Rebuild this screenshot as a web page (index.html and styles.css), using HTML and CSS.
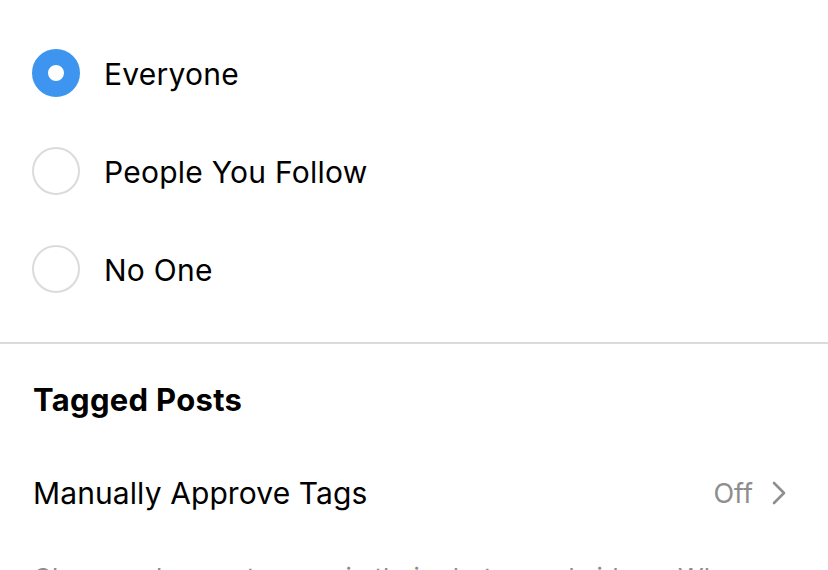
FILE: index.html
```html
<!DOCTYPE html>
<html lang="en">
<head>
    <meta charset="UTF-8">
    <meta name="viewport" content="width=device-width, initial-scale=1.0">
    <title>Tags</title>
    <link rel="stylesheet" href="styles.css">
</head>
<body>
    <div class="screen">
        <div class="options">
            <label class="option">
                <span class="radio selected"></span>
                <span class="option-label">Everyone</span>
            </label>
            <label class="option">
                <span class="radio"></span>
                <span class="option-label">People You Follow</span>
            </label>
            <label class="option">
                <span class="radio"></span>
                <span class="option-label">No One</span>
            </label>
        </div>

        <div class="section">
            <h2 class="section-title">Tagged Posts</h2>
            <div class="setting-row">
                <span class="setting-label">Manually Approve Tags</span>
                <span class="setting-value">
                    Off
                    <svg class="chevron" width="18" height="24" viewBox="0 0 18 24">
                        <path d="M4 2 L14 12 L4 22" fill="none" stroke="#8e8e8e" stroke-width="2.6" stroke-linecap="round" stroke-linejoin="round"/>
                    </svg>
                </span>
            </div>
            <p class="section-note">Choose who can tag you in their photos and videos. When people you don't follow tag you, you'll see the tags here.</p>
        </div>
    </div>
</body>
</html>
```

FILE: styles.css
```css
* {
    margin: 0;
    padding: 0;
    box-sizing: border-box;
}

body {
    font-family: 'Inter', 'Liberation Sans', sans-serif;
    color: #000;
    background-color: #fff;
}

.screen {
    width: 828px;
    height: 570px;
    overflow: hidden;
}

.options {
    padding: 24px 0 24px 32px;
    border-bottom: 2px solid #dbdbdb;
}

.option {
    display: flex;
    align-items: center;
    gap: 24px;
    height: 98px;
}

.radio {
    width: 48px;
    height: 48px;
    border-radius: 50%;
    border: 2.5px solid #dbdbdb;
    flex-shrink: 0;
}

.radio.selected {
    border: 16px solid #3d95ef;
    background-color: #fff;
}

.option-label {
    font-size: 30px;
    letter-spacing: 0.25px;
    padding-top: 2px;
}

.section {
    padding: 0 40px 0 33px;
}

.section-title {
    font-size: 31px;
    font-weight: 700;
    letter-spacing: 0.3px;
    height: 110px;
    display: flex;
    align-items: center;
}

.setting-row {
    display: flex;
    align-items: center;
    justify-content: space-between;
    height: 78px;
}

.setting-label {
    font-size: 30px;
    letter-spacing: 0.1px;
}

.setting-value {
    display: flex;
    align-items: center;
    gap: 17px;
    font-size: 27px;
    color: #8e8e8e;
}

.section-note {
    margin-top: 28px;
    font-size: 26px;
    color: #8e8e8e;
    line-height: 1.4;
}
```
